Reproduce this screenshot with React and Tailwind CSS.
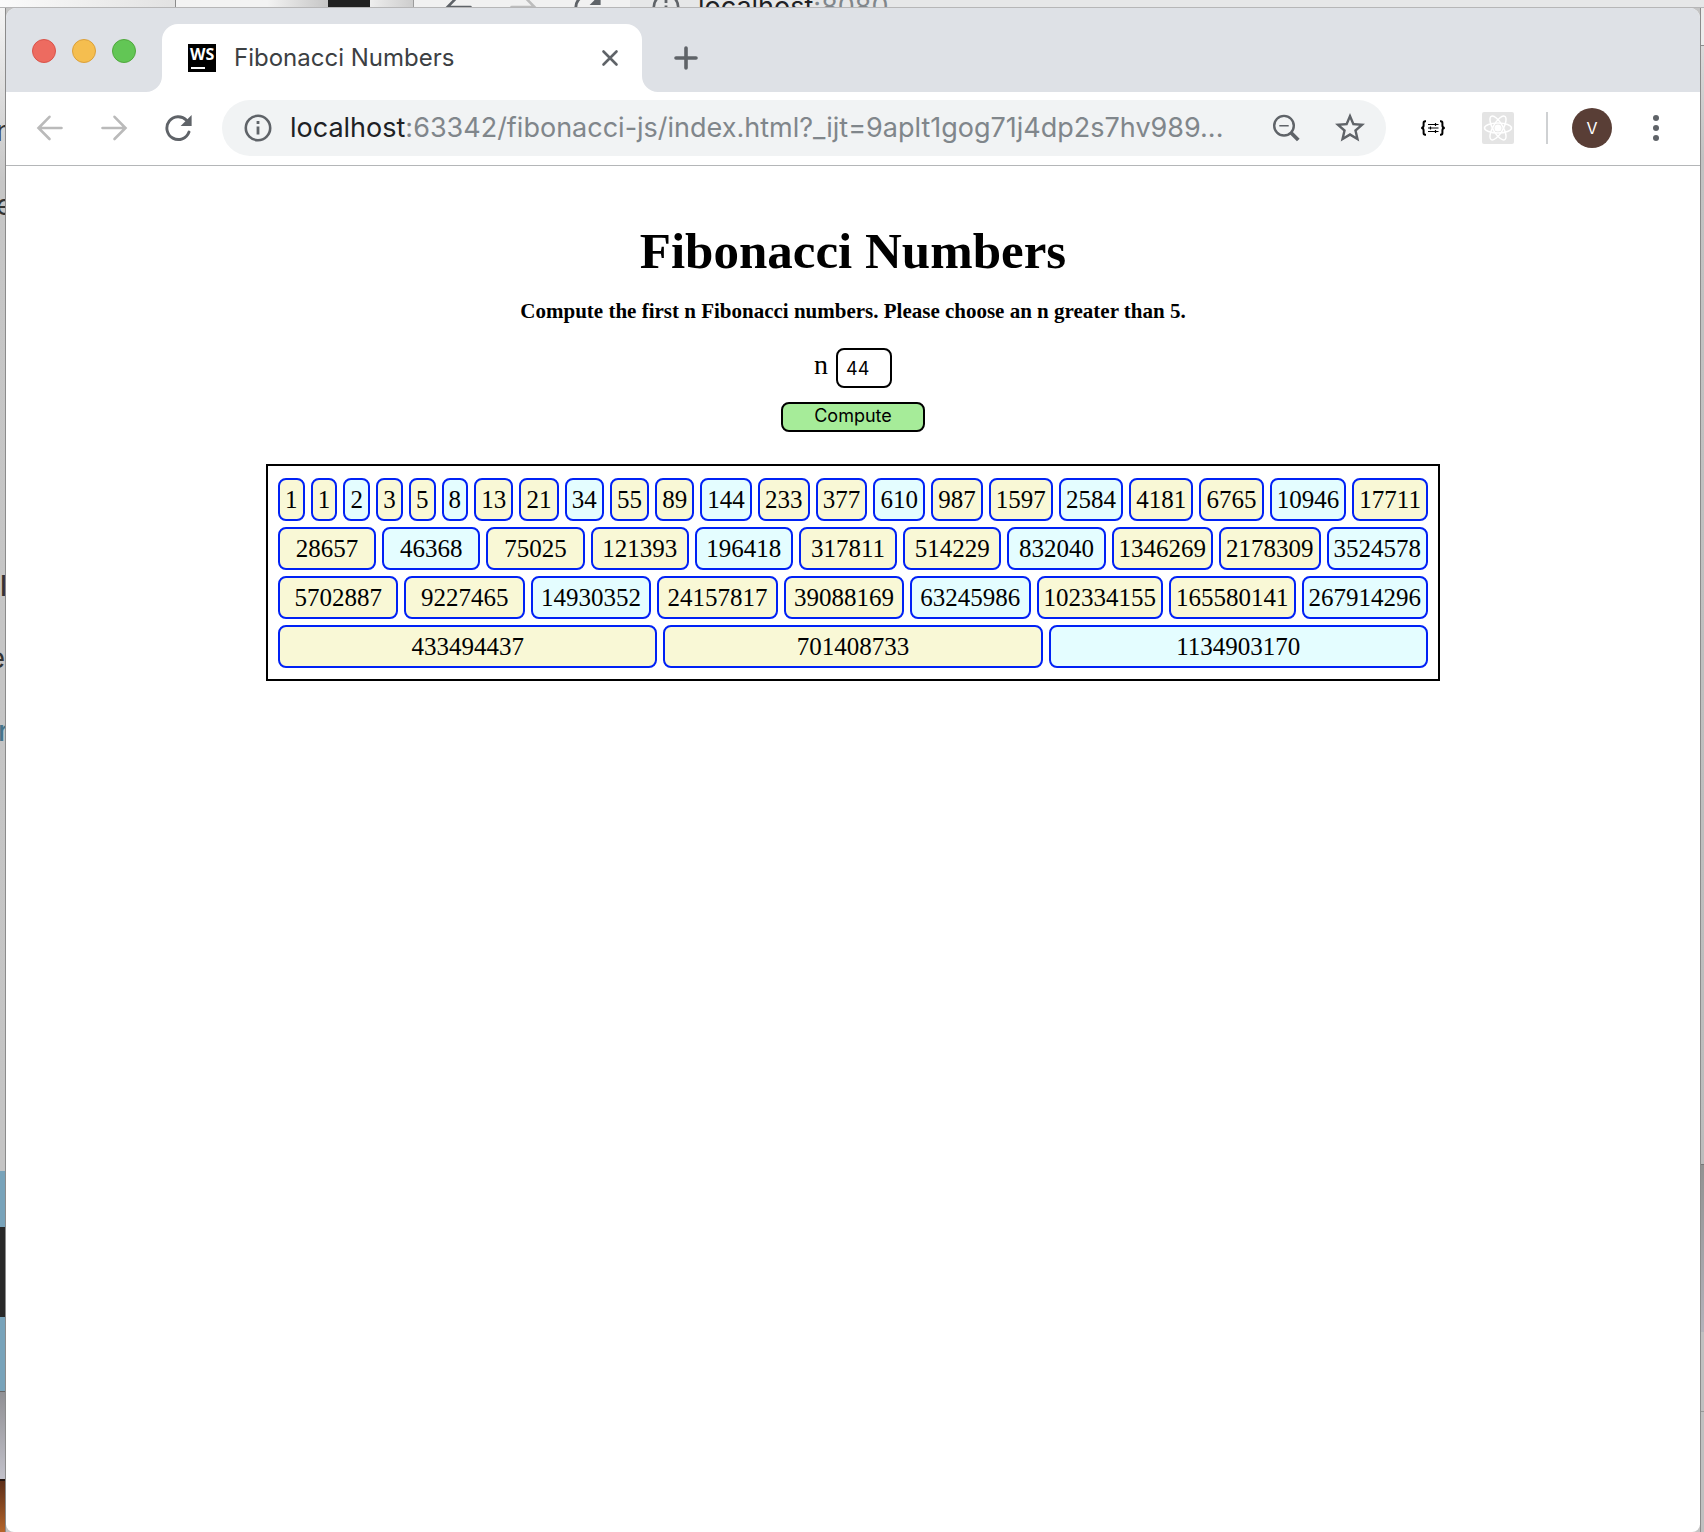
import React from "react";

const fontUI = "font-['Inter',sans-serif]";

const rows = [
  ["1","1","2","3","5","8","13","21","34","55","89","144","233","377","610","987","1597","2584","4181","6765","10946","17711"],
  ["28657","46368","75025","121393","196418","317811","514229","832040","1346269","2178309","3524578"],
  ["5702887","9227465","14930352","24157817","39088169","63245986","102334155","165580141","267914296"],
  ["433494437","701408733","1134903170"],
];

function BackArrow({ className }) {
  return (
    <svg className={className} viewBox="0 0 28 28" fill="none" stroke="currentColor" strokeWidth="2.6" strokeLinecap="round" strokeLinejoin="miter">
      <path d="M25.500 14H3M13.500 2.800 2.500 14l11 11" />
    </svg>
  );
}

function ForwardArrow({ className }) {
  return (
    <svg className={className} viewBox="0 0 28 28" fill="none" stroke="currentColor" strokeWidth="2.6" strokeLinecap="round" strokeLinejoin="miter">
      <path d="M2.500 14H25M14.500 2.800 25.500 14l-11 11" />
    </svg>
  );
}

function Reload({ className }) {
  return (
    <svg className={className} viewBox="0 0 28 28">
      <path d="M25 18A11.400 11.400 0 1 1 22.500 6.200" fill="none" stroke="currentColor" strokeWidth="2.900" strokeLinecap="round" />
      <path d="M27.600 1v11H16.600z" fill="currentColor" />
    </svg>
  );
}

function InfoIcon({ className }) {
  return (
    <svg className={className} viewBox="0 0 28 28" fill="none" stroke="currentColor">
      <circle cx="14" cy="14" r="12.2" strokeWidth="2.6" />
      <path d="M14 12.6v8M14 7v3" strokeWidth="2.8" />
    </svg>
  );
}

function DesktopTop() {
  return (
    <div className="flex h-2 shrink-0 overflow-hidden border-b border-[#b6b6b7] bg-[#e6e6e7]" aria-hidden="true">
      <div className="w-[176px] border-r border-[#8c8c8c] bg-linear-to-r from-[#fbfbfb] to-[#e2e2e2]" />
      <div className="w-[152px] bg-linear-to-r from-[#f3f3f3] via-[#f3f3f3] via-60% to-[#c6c6c6]" />
      <div className="w-[42px] bg-[#212121]" />
      <div className="w-[44px] border-r border-[#9c9c9c] bg-linear-to-r from-[#eeeeee] to-[#cdcdcd]" />
      <div className="flex w-[216px] items-start bg-[#f1f1f1]">
        <BackArrow className="-mt-[7px] ml-[31px] size-7 shrink-0 text-[#5f6368]" />
        <ForwardArrow className="-mt-[7px] ml-9 size-7 shrink-0 text-[#bdbdbd]" />
        <Reload className="-mt-[7px] ml-9 size-7 shrink-0 text-[#5f6368]" />
      </div>
      <div className={`flex grow items-start bg-[#e6e7e8] text-[27px] leading-8 text-[#202124] ${fontUI}`}>
        <InfoIcon className="-mt-[7px] ml-[22px] size-7 shrink-0 text-[#5f6368]" />
        <span className="-mt-[9px] ml-[18px]">localhost<span className="text-[#80868b]">:8080</span></span>
      </div>
    </div>
  );
}

function DesktopLeft() {
  return (
    <div className={`flex w-1.5 shrink-0 flex-col overflow-hidden border-r border-[#8b8b8b] text-[28px] leading-8 text-[#333] ${fontUI}`} aria-hidden="true">
      <div className="flex h-[1163px] flex-col items-start bg-linear-to-b from-[#f4f4f4] via-[#c6c6c6] via-15% to-[#c4c4c4]">
        <span className="-ml-1 mt-[107px]">n</span>
        <span className="-ml-1 mt-[42px]">e</span>
        <span className="-mr-0.5 mt-[349px] self-end font-medium">pl</span>
        <span className="mt-10 self-end">e</span>
        <span className="-ml-0.5 mt-[41px] font-medium text-[#45748a]">r</span>
      </div>
      <div className="h-14 bg-[#78a3ba]" />
      <div className="h-[90px] bg-[#282828]" />
      <div className="h-[74px] bg-[#78a3ba]" />
      <div className="h-22 border-t border-[#666] bg-linear-to-b from-[#909094] to-[#c2c1ca]" />
      <div className="grow border-t-2 border-[#241510] bg-linear-to-b from-[#5d2e18] to-[#b5652a]" />
    </div>
  );
}

function DesktopRight() {
  return (
    <div className="flex w-1 shrink-0 flex-col border-l border-[#8b8b8b]" aria-hidden="true">
      <div className="h-[38px] border-b border-[#8c8c8c] bg-[#ececec]" />
      <div className="h-[1119px] border-b border-[#777] bg-linear-to-b from-[#dadada] via-[#c2c2c2] via-10% to-[#bcbcbc]" />
      <div className="h-[167px] bg-linear-to-b from-[#929292] to-[#b4b3bb]" />
      <div className="h-20 border-b border-[#999] bg-[#c0c0c0]" />
      <div className="grow bg-[#c0c0c0]" />
    </div>
  );
}

function TabStrip() {
  return (
    <div className="flex h-[84px] items-end bg-[#dee1e6]">
      <div className="flex w-[156px] gap-4 self-start pt-[31px] pl-[26px]">
        <button aria-label="Close window" className="size-6 rounded-full border border-[#d9534a] bg-[#ed6b60]" />
        <button aria-label="Minimize window" className="size-6 rounded-full border border-[#dba03a] bg-[#f5be4f]" />
        <button aria-label="Zoom window" className="size-6 rounded-full border border-[#50a83d] bg-[#62c655]" />
      </div>
      <div className="relative flex h-[68px] w-[480px] items-center rounded-t-2xl bg-white pr-[18px] pl-[26px]">
        <svg className="absolute bottom-0 -left-4 size-4" viewBox="0 0 16 16" aria-hidden="true"><path d="M16 0v16H0A16 16 0 0 0 16 0z" fill="#fff" /></svg>
        <svg className="absolute -right-4 bottom-0 size-4" viewBox="0 0 16 16" aria-hidden="true"><path d="M0 0v16h16A16 16 0 0 1 0 0z" fill="#fff" /></svg>
        <span className="flex size-7 flex-col bg-black pt-px pl-0.5 text-white" aria-hidden="true">
          <span className="h-[22px] font-['Open_Sans',sans-serif] text-[16px] leading-[18px] font-bold">WS</span>
          <span className="ml-px h-0.5 w-3.5 bg-white" />
        </span>
        <span className={`ml-[18px] grow text-[24px] leading-8 whitespace-nowrap text-[#3c4043] ${fontUI}`}>Fibonacci Numbers</span>
        <button aria-label="Close tab" className="p-1 text-[#5f6368]">
          <svg className="size-5" viewBox="0 0 20 20" stroke="currentColor" strokeWidth="2.6" strokeLinecap="round"><path d="M3.500 3.500l13 13M16.500 3.500l-13 13" /></svg>
        </button>
      </div>
      <button aria-label="New tab" className="mb-[22px] ml-8 text-[#5f6368]">
        <svg className="size-6" viewBox="0 0 24 24" stroke="currentColor" strokeWidth="3.6" strokeLinecap="round"><path d="M12 2v20M2 12h20" /></svg>
      </button>
    </div>
  );
}

function Toolbar() {
  return (
    <div className="flex h-[74px] items-center border-b border-[#b4b6b8] bg-white pb-px pl-[30px]">
      <button aria-label="Back" className="text-[#bababa]"><BackArrow className="size-7" /></button>
      <button aria-label="Forward" className="ml-9 text-[#bababa]"><ForwardArrow className="size-7" /></button>
      <button aria-label="Reload" className="ml-9 text-[#5f6368]"><Reload className="size-7" /></button>
      <div className="ml-[30px] flex h-14 min-w-0 grow items-center rounded-full bg-[#f1f3f4] pr-[18px] pl-[22px]">
        <InfoIcon className="size-7 shrink-0 text-[#5f6368]" />
        <span className={`ml-[18px] grow overflow-hidden text-[27px] leading-9 whitespace-nowrap text-[#80868b] ${fontUI}`}>
          <span className="text-[#202124]">localhost</span>:63342/fibonacci-js/index.html?_ijt=9aplt1gog71j4dp2s7hv989...
        </span>
        <button aria-label="Zoom level" className="shrink-0 text-[#5f6368]">
          <svg className="size-7" viewBox="0 0 28 28" fill="none" stroke="currentColor"><circle cx="12" cy="11.7" r="9.800" strokeWidth="2.4" /><path d="M7.300 11.700h9.400" strokeWidth="1.600" /><path d="m18.800 18.500 7.500 7.500" strokeWidth="3.800" /></svg>
        </button>
        <button aria-label="Bookmark this page" className="ml-8 shrink-0 text-[#5f6368]">
          <svg className="size-9" viewBox="0 0 24 24" fill="currentColor"><path d="M22 9.24l-7.19-.62L12 2 9.19 8.63 2 9.24l5.46 4.73L5.82 21 12 17.27 18.18 21l-1.63-7.03L22 9.24zM12 15.4l-3.76 2.27 1-4.28-3.32-2.88 4.38-.38L12 6.1l1.71 4.04 4.38.38-3.32 2.88 1 4.28L12 15.4z" /></svg>
        </button>
      </div>
      <button aria-label="JSON formatter" className="ml-[34px] text-black">
        <svg className="h-4 w-[26px]" viewBox="0 0 26 16" fill="none" stroke="currentColor">
          <path d="M6 1.200H5.200Q3.600 1.200 3.600 3v2.600Q3.600 8 1.200 8q2.400 0 2.400 2.400V13q0 1.800 1.600 1.800H6M20 1.200h.8q1.600 0 1.600 1.800v2.600q0 2.400 2.400 2.400-2.400 0-2.400 2.400V13q0 1.800-1.600 1.800H20" strokeWidth="2" />
          <path d="M8 4.500h10.500M8 8h10.500M8 11.500h10.500" strokeWidth="1.200" />
          <path d="M15.500 3v3M10.500 6.500v3M15.500 10v3" strokeWidth="1.200" />
        </svg>
      </button>
      <button aria-label="React Developer Tools" className="ml-9 rounded-xs bg-[#e4e4e4] text-white">
        <svg className="size-8" viewBox="0 0 32 32" fill="none" stroke="currentColor" strokeWidth="1.500">
          <ellipse cx="16" cy="16" rx="13.500" ry="5" />
          <ellipse cx="16" cy="16" rx="13.500" ry="5" transform="rotate(60 16 16)" />
          <ellipse cx="16" cy="16" rx="13.500" ry="5" transform="rotate(120 16 16)" />
          <circle cx="16" cy="16" r="2.800" fill="currentColor" />
        </svg>
      </button>
      <span className="ml-8 h-8 w-0.5 bg-[#cfd1d3]" />
      <button className={`ml-6 flex size-10 items-center justify-center rounded-full bg-[#593e36] text-[16px] text-white ${fontUI}`}>V</button>
      <button aria-label="Menu" className="mr-[41px] ml-[41px] flex flex-col gap-1 text-[#5f6368]">
        <span className="size-1.5 rounded-full bg-current" />
        <span className="size-1.5 rounded-full bg-current" />
        <span className="size-1.5 rounded-full bg-current" />
      </button>
    </div>
  );
}

function Page() {
  return (
    <main className="flex grow flex-col items-center px-[260px] pt-[55px] font-['Liberation_Serif',serif] text-black">
      <h1 className="text-[51px] leading-[60px] font-bold">Fibonacci Numbers</h1>
      <p className="mt-[18px] text-[21px] leading-6 font-bold">Compute the first n Fibonacci numbers. Please choose an n greater than 5.</p>
      <div className="mt-[25px] flex items-start">
        <label htmlFor="n" className="text-[28px] leading-[34px]">n</label>
        <input id="n" defaultValue="44" className={`ml-2 h-10 w-14 rounded-lg border-2 border-black bg-white pl-2 text-[18px] ${fontUI}`} />
      </div>
      <button className={`mt-3.5 h-[30px] w-36 rounded-lg border-2 border-black bg-[#a6ec99] pb-0.5 text-[18px] leading-6 ${fontUI}`}>Compute</button>
      <div className="mt-8 flex w-full flex-col gap-1.5 border-2 border-black px-2.5 pt-3 pb-[11px] text-[25px] leading-[38px]">
        {rows.map((row, r) => (
          <div key={r} className="flex gap-1.5">
            {row.map((v, i) => (
              <div key={i} className={`grow rounded-lg border-2 border-[#0021f5] px-[5px] pt-px text-center ${r === 0 ? "basis-auto" : "basis-0"} ${Number(v) % 2 ? "bg-[#f9f8d6]" : "bg-[#e4fdff]"}`}>{v}</div>
            ))}
          </div>
        ))}
      </div>
    </main>
  );
}

export default function App() {
  return (
    <div className="flex min-h-screen flex-col bg-[#c4c4c4]">
      <DesktopTop />
      <div className="flex grow">
        <DesktopLeft />
        <div className="flex min-w-0 grow flex-col overflow-hidden rounded-t-[10px] rounded-b-lg bg-white">
          <TabStrip />
          <Toolbar />
          <Page />
        </div>
        <DesktopRight />
      </div>
    </div>
  );
}
